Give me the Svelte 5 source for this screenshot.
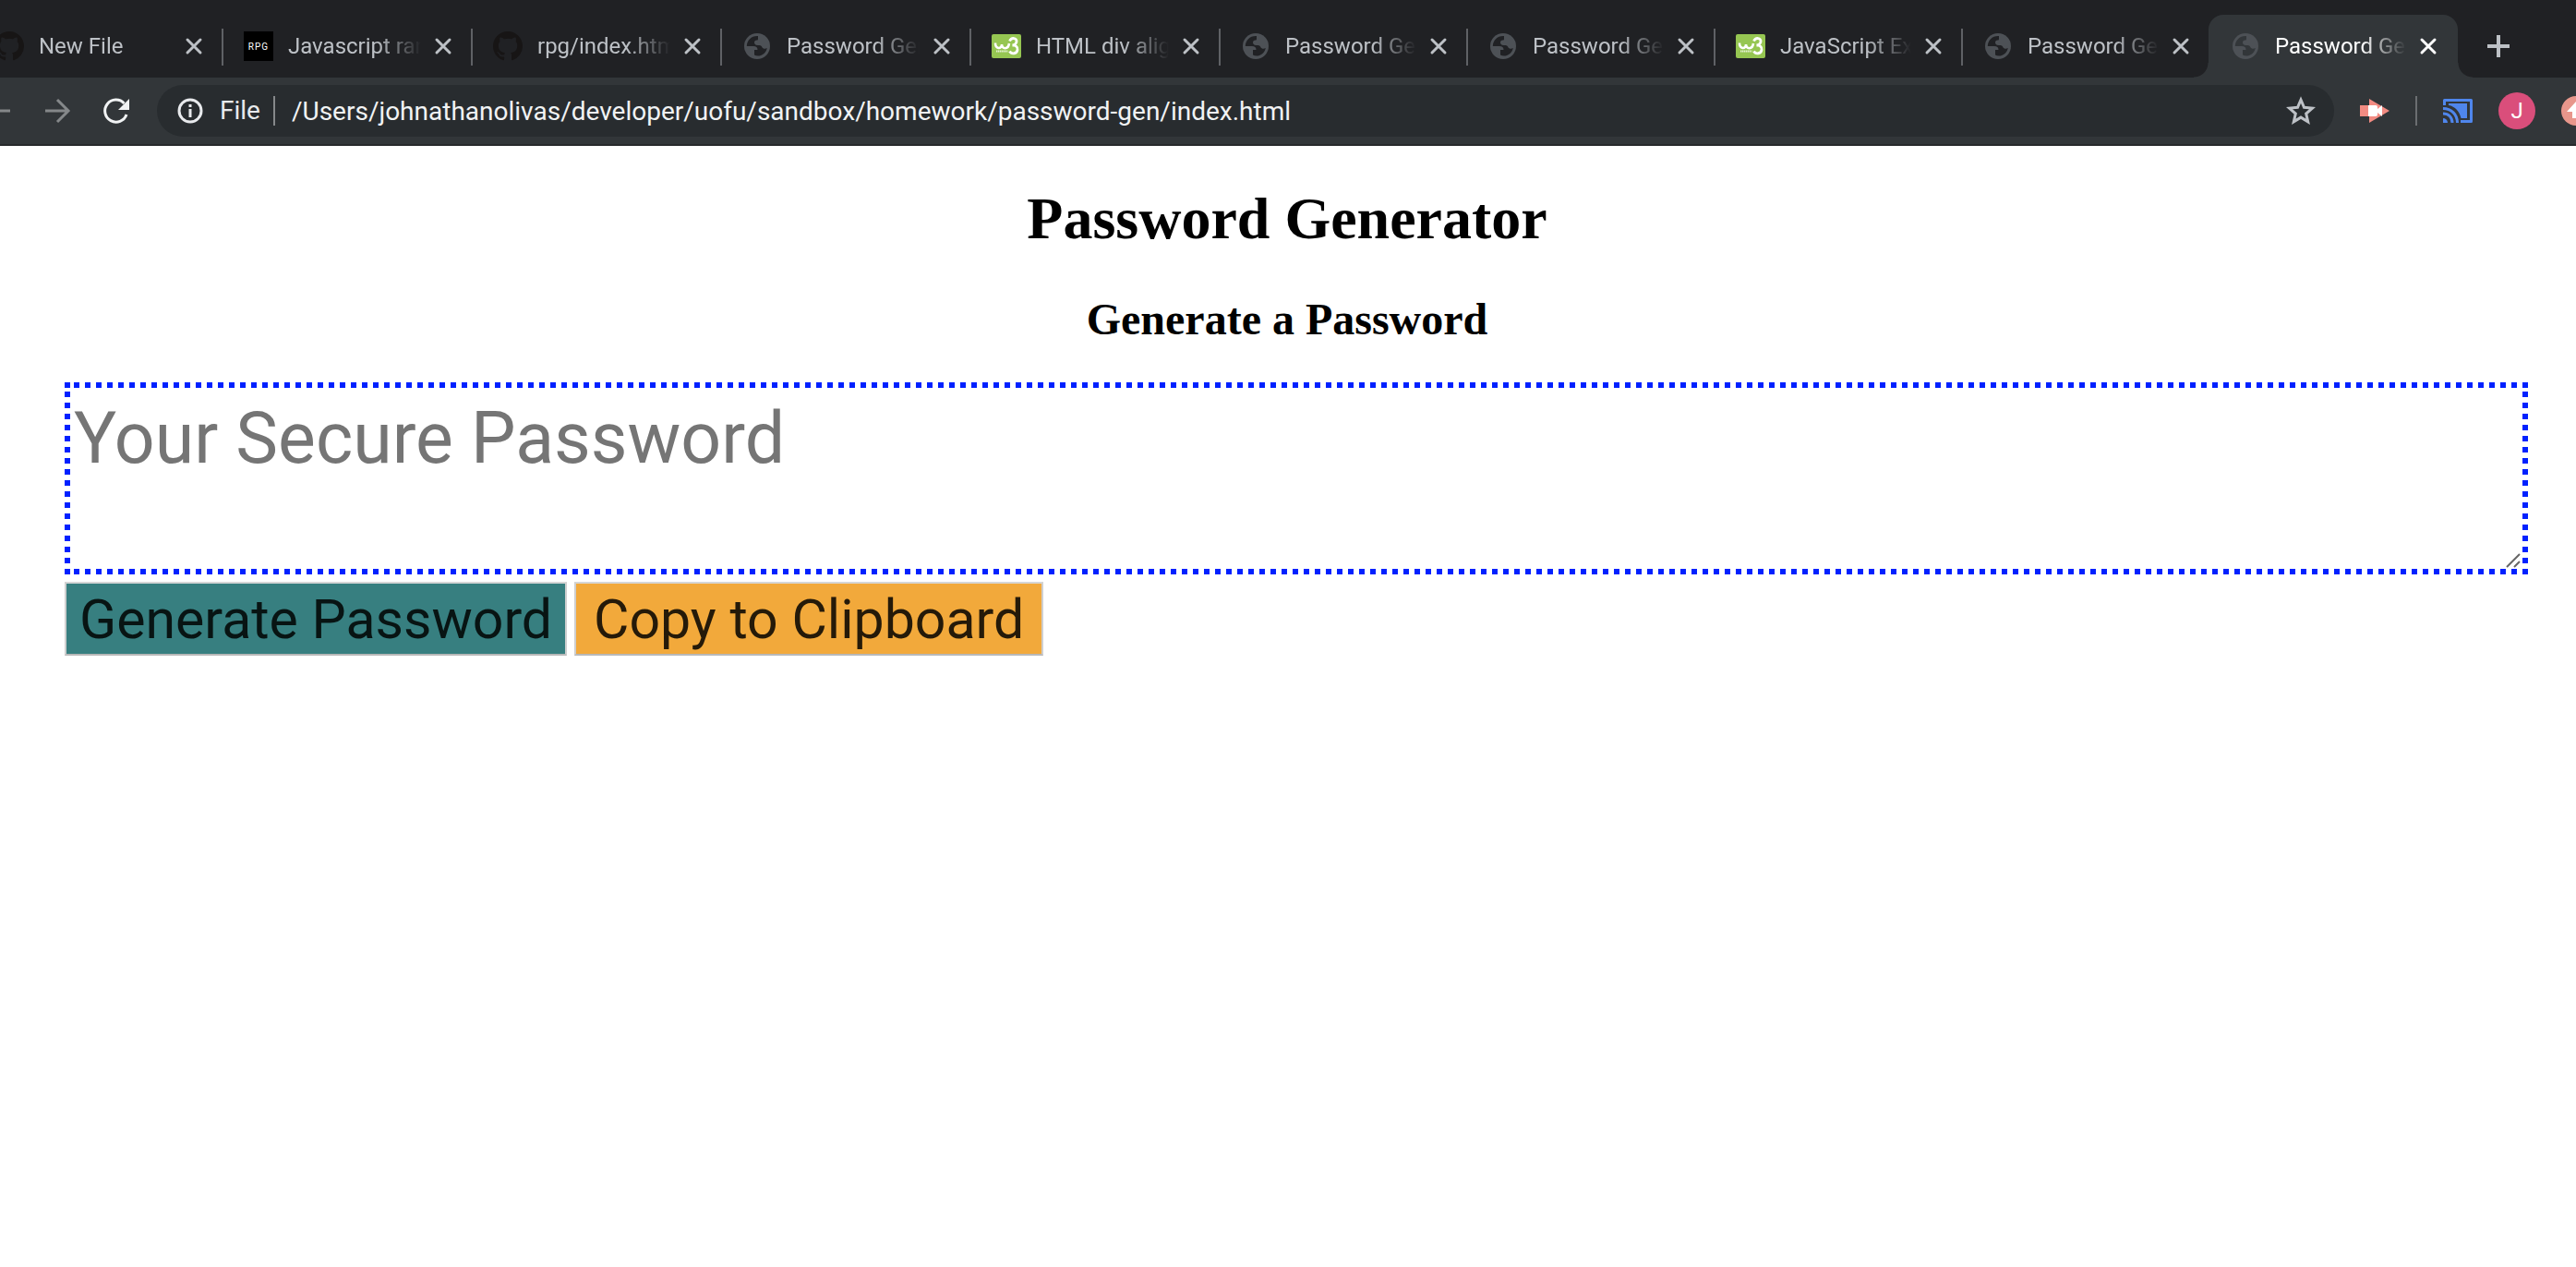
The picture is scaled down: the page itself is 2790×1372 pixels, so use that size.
<script>
  const tabs = [
    { title: 'New File', icon: 'github' },
    { title: 'Javascript random', icon: 'rpg' },
    { title: 'rpg/index.html', icon: 'github' },
    { title: 'Password Generator', icon: 'globe' },
    { title: 'HTML div align', icon: 'w3' },
    { title: 'Password Generator', icon: 'globe', narrow: true },
    { title: 'Password Generator', icon: 'globe', narrow: true },
    { title: 'JavaScript Examples', icon: 'w3', narrow: true },
    { title: 'Password Generator', icon: 'globe', narrow: true },
    { title: 'Password Generator', icon: 'globe', active: true },
  ];
</script>

<header>
  <nav class="tabs" aria-label="Open tabs">
    {#each tabs as tab}
      <div class="tab" class:narrow={tab.narrow} class:active={tab.active}>
        {#if tab.icon === 'github'}
          <svg class="fav" viewBox="0 0 16 16" fill="#171515"><path d="M8 0C3.58 0 0 3.58 0 8c0 3.54 2.29 6.53 5.47 7.59.4.07.55-.17.55-.38v-1.49c-2.01.37-2.53-.49-2.69-.94-.09-.23-.48-.94-.82-1.13-.28-.15-.68-.52-.01-.53.63-.01 1.08.58 1.23.82.72 1.21 1.87.87 2.33.66.07-.52.28-.87.51-1.07-1.78-.2-3.64-.89-3.64-3.95 0-.87.31-1.59.82-2.15-.08-.2-.36-1.02.08-2.12 0 0 .67-.21 2.2.82.64-.18 1.32-.27 2-.27s1.36.09 2 .27c1.53-1.04 2.2-.82 2.2-.82.44 1.1.16 1.92.08 2.12.51.56.82 1.27.82 2.15 0 3.07-1.87 3.75-3.65 3.95.29.25.54.73.54 1.48v2.2c0 .21.15.46.55.38A8 8 0 0 0 16 8c0-4.42-3.58-8-8-8z" /></svg>
        {:else if tab.icon === 'globe'}
          <svg class="fav" viewBox="0 0 32 32"><circle cx="16" cy="16" r="14" fill="#4d5156" /><path class="land" d="M17 5C10 4.500 5 9.500 4.800 16H12c3 0 4.500 1.500 4.500 4H13v5.500c1.500 1 3.500 1.300 5.500 1 4.500-1 7.500-4.500 8.300-8.500-2 1.200-4.500.8-5.300-.8-.8-2-2.500-2.200-5-2.200-2.500-.2-3.500-1.500-3.500-3s1-2.500 2.500-2.500c1.500 0 1.500-.5 1.500-2 0-1 0-2 0-2.500z" /></svg>
        {:else if tab.icon === 'w3'}
          <svg class="fav" viewBox="0 0 32 32"><rect y="3" width="32" height="26" rx="2" fill="#96c652" /><path d="M4 12.500c0 7 7 7 7 1.500 0 5.500 7 6 8-1" fill="none" stroke="#fff" stroke-width="2.600" /><path d="M19.500 10.500c2-4.500 8-3.500 7.500.5-.3 2.500-2.500 4-4.500 4 3.500-.3 6 2 5.500 5-.8 4.500-6.500 5-8.500 1.500" fill="none" stroke="#fff" stroke-width="2.800" /><path d="M5 21.500h12.500" stroke="#e4f0d2" stroke-width="2" stroke-dasharray="1.500 .5" /></svg>
        {:else}
          <span class="fav rpg">RPG</span>
        {/if}
        <span class="title">{tab.title}</span>
        <button class="close" aria-label="Close tab"><svg viewBox="0 0 24 24"><path d="M5 5l14 14M19 5L5 19" /></svg></button>
      </div>
    {/each}
    <button class="new" aria-label="New tab"><svg viewBox="0 0 24 24"><path d="M12 0v24M0 12h24" /></svg></button>
  </nav>

  <div class="toolbar">
    <div class="nav">
      <button class="dim" aria-label="Back"><svg viewBox="0 0 32 32"><path d="M29 16H5M16 4L4 16l12 12" /></svg></button>
      <button class="dim" aria-label="Forward"><svg viewBox="0 0 32 32"><path d="M3 16h24M16 4l12 12-12 12" /></svg></button>
      <button aria-label="Reload"><svg viewBox="0 0 32 32"><path d="M27 20A12 12 0 1 1 24.500 8" /><path d="M30 3v12H18z" class="solid" /></svg></button>
    </div>
    <div class="omnibox">
      <svg class="info" viewBox="0 0 32 32"><circle cx="16" cy="16" r="12" /><path d="M16 14v9M16 9v3" /></svg>
      <span class="scheme">File</span>
      <input class="url" aria-label="Address" value="/Users/johnathanolivas/developer/uofu/sandbox/homework/password-gen/index.html" />
      <button class="star" aria-label="Bookmark"><svg viewBox="0 0 32 32"><path d="M16 4l3.500 8.300 9 .8-6.800 5.900 2 8.800L16 23.100l-7.700 4.700 2-8.800-6.800-5.900 9-.8z" /></svg></button>
    </div>
    <div class="ext">
      <button aria-label="Recorder"><svg viewBox="0 0 32 32"><path d="M0 10h9v12H0z" fill="#f28b82" /><path d="M10 3l22 13-22 13z" fill="#f28b82" /><path d="M9 10h8q2 0 2 2v2l5-4v12l-5-4v2q0 2-2 2H9z" fill="#fff" /></svg></button>
      <span class="rule"></span>
      <button aria-label="Cast"><svg viewBox="0 0 32 32"><path d="M1.500 10V4.500h29v23H19" fill="none" stroke="#4f86ec" stroke-width="3" stroke-linejoin="round" /><path d="M6 8h20v16h-6.500C18 17 13 11 6 10z" fill="#4f86ec" /><path d="M0 13.500c9 0 15.500 6.500 15.500 15.500M0 19c6 0 10 4 10 10" fill="none" stroke="#4f86ec" stroke-width="3" /><path d="M0 24a5 5 0 0 1 5 5H0z" fill="#4f86ec" /></svg></button>
      <button class="avatar" aria-label="Profile">J</button>
      <button aria-label="Update"><svg viewBox="0 0 32 32"><circle cx="16" cy="16" r="16" fill="#e8968b" /><path d="M16 6l10 11h-6v7h-8v-7H6z" fill="#fff" /></svg></button>
    </div>
  </div>
</header>

<main>
  <h1>Password Generator</h1>
  <h2>Generate a Password</h2>
  <div class="form">
    <div class="field">
      <textarea aria-label="Your Secure Password" placeholder="Your Secure Password" rows="2"></textarea>
      <svg class="grip" viewBox="0 0 16 16" aria-hidden="true"><path d="M1 15L15 1M9 15l6-6" /></svg>
    </div>
    <div class="actions">
      <button class="generate">Generate Password</button>
      <button class="copy">Copy to Clipboard</button>
    </div>
  </div>
</main>

<style>
  :global(body) { margin: 0; background: #fff; overflow-x: hidden; }
  header { font-family: Roboto, "Liberation Sans", sans-serif; overflow: hidden; background: #202124; }
  button { font: inherit; padding: 0; border: 0; background: none; color: inherit; }
  svg { display: block; flex: none; }

  .tabs { display: flex; height: 68px; padding-top: 16px; margin-left: -28px; }
  .tab { display: flex; flex: none; align-items: center; box-sizing: border-box; width: 270px; padding: 0 20px 0 22px; color: #bdc1c6; position: relative; }
  .tab::after { content: ""; position: absolute; right: 0; top: 15px; width: 2px; height: 40px; background: #5f6165; }
  .narrow { width: 268px; }
  .active { background: #323639; color: #fff; padding-left: 24px; margin-left: -2px; border-radius: 16px 16px 0 0; }
  .tab:has(+ .active)::after { display: none; }
  .active::before, .active::after { content: ""; position: absolute; top: auto; bottom: 0; width: 16px; height: 16px; }
  .active::before { left: -16px; background: radial-gradient(circle at 0 0, #202124 15px, #323639 16px); }
  .active::after { right: -16px; background: radial-gradient(circle at 100% 0, #202124 15px, #323639 16px); }
  .fav { width: 32px; height: 32px; flex: none; margin-right: 16px; }
  .land { fill: #202124; }
  .active .land { fill: #323639; }
  .rpg { display: grid; place-items: center; background: #000; color: #fff; font-size: 10px; letter-spacing: 1px; }
  .title { flex: 1; min-width: 0; overflow: hidden; white-space: nowrap; font-size: 24px; line-height: 32px; mask-image: linear-gradient(to right, #000 calc(100% - 48px), transparent); }
  .close { width: 24px; height: 24px; margin-left: 12px; }
  .close svg { width: 24px; height: 24px; fill: none; stroke: currentColor; stroke-width: 3; stroke-linecap: round; }
  .new { width: 24px; margin-left: 32px; display: grid; place-items: center; color: #bdc1c6; }
  .new svg { width: 24px; height: 24px; fill: none; stroke: currentColor; stroke-width: 4; }

  .toolbar { display: flex; align-items: center; height: 72px; background: #323639; border-bottom: 2px solid #27292c; }
  .nav { display: flex; gap: 32px; margin-left: -18px; color: #f1f3f4; }
  .nav svg, .ext svg { width: 32px; height: 32px; }
  .nav svg { fill: none; stroke: currentColor; stroke-width: 3; }
  .nav .solid { fill: currentColor; stroke: none; }
  .nav .dim { color: #85888a; }
  .omnibox { display: flex; flex: 1; min-width: 0; align-items: center; box-sizing: border-box; height: 56px; margin-left: 28px; padding: 0 20px; border-radius: 28px; background: #282c2f; color: #f1f3f4; font-size: 28px; }
  .info { width: 32px; height: 32px; fill: none; stroke: #e8eaed; stroke-width: 3; }
  .scheme { margin-left: 16px; padding-right: 14px; border-right: 2px solid #85888a; line-height: 32px; color: #e8eaed; }
  .url { flex: 1; min-width: 0; margin-left: 18px; padding: 0; border: 0; outline: 0; background: none; color: inherit; font: inherit; }
  .star svg { width: 32px; height: 32px; fill: none; stroke: #bdc1c6; stroke-width: 3; }
  .ext { display: flex; align-items: center; margin: 0 -16px 0 28px; }
  .rule { width: 2px; height: 32px; margin: 0 28px; background: #6b6e71; }
  .avatar { width: 40px; height: 40px; margin: 0 28px; border-radius: 50%; background: #da4e7b; color: #fff; font-size: 24px; }

  main { color: #000; padding-right: 2px; }
  h1, h2 { margin: 0; text-align: center; font-family: "Liberation Serif", serif; font-weight: bold; }
  h1 { padding-top: 42px; font-size: 64px; line-height: 74px; }
  h2 { padding: 44px 0 40px; font-size: 48px; line-height: 56px; }
  .form { padding: 0 50px 0 70px; font-family: Roboto, "Liberation Sans", sans-serif; }
  .field { position: relative; }
  textarea {
    --dot: #0021ff;
    display: block; box-sizing: border-box; width: 100%; margin: 0; padding: 8px 4px 0; border: 6px solid transparent; outline: 0; resize: none; overflow: hidden;
    font: inherit; font-size: 77px; line-height: 94px;
    background-color: #fff; background-origin: border-box; background-clip: border-box;
    background-image: linear-gradient(var(--dot), var(--dot)), linear-gradient(to right, transparent 6px, var(--dot) 6px), linear-gradient(to right, transparent 6px, var(--dot) 6px), linear-gradient(transparent 6px, var(--dot) 6px), linear-gradient(transparent 6px, var(--dot) 6px);
    background-size: 6px 6px, 12px 6px, 12px 6px, 6px 12px, 6px 12px;
    background-position: left top, right top, right bottom, left bottom, right bottom;
    background-repeat: no-repeat, repeat-x, repeat-x, repeat-y, repeat-y;
  }
  textarea::placeholder { color: #757575; opacity: 1; }
  .grip { position: absolute; right: 8px; bottom: 7px; width: 16px; height: 16px; stroke: #666; stroke-width: 2; }
  .actions { display: flex; gap: 8px; margin-top: 8px; }
  .actions button { box-sizing: border-box; height: 80px; min-width: 508px; padding: 2px 14px 0; border: 2px solid; border-color: #d6d6d6 #cfcfcf #b8b8b8 #cfcfcf; font-size: 59px; line-height: 72px; }
  .generate { background: #377f80; color: #081413; }
  .copy { background: #f2a93b; color: #251a09; }
</style>
